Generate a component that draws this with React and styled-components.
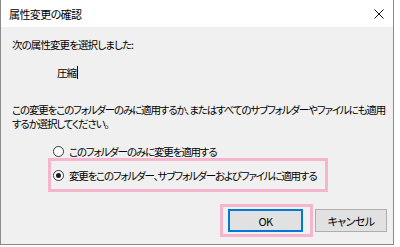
import React from "react";
import styled, { createGlobalStyle } from "styled-components";

const Global = createGlobalStyle`
  html, body { margin: 0; padding: 0; background: #ffffff; }
  body { font-family: "Noto Sans CJK JP", "Noto Sans", sans-serif; }
`;

const Window = styled.div`
  width: 394px;
  height: 245px;
  box-sizing: border-box;
  border: 1px solid #8a8a8a;
  border-top: none;
  display: flex;
  flex-direction: column;
  background: #f0f0f0;
  font-family: "Noto Sans CJK JP", sans-serif;
  font-feature-settings: "palt";
  color: #000;
`;

const TitleBar = styled.div`
  height: 27px;
  background: #ffffff;
  display: flex;
  align-items: center;
  justify-content: space-between;
  padding: 0 4px 0 8px;
  flex-shrink: 0;
`;

const Title = styled.span`
  font-size: 11px;
  letter-spacing: -0.6px;
  line-height: 14px;
`;

const CloseBtn = styled.span`
  width: 20px;
  height: 20px;
  display: flex;
  align-items: center;
  justify-content: center;
`;

const Content = styled.div`
  flex: 1;
  display: flex;
  flex-direction: column;
  padding: 0 6px 0 11px;
`;

const Text = styled.div`
  font-size: 10.5px;
  line-height: ${(p) => p.$lh || 15}px;
  letter-spacing: ${(p) => p.$ls ?? -0.9}px;
  margin-top: ${(p) => p.$mt || 0}px;
  padding-left: ${(p) => p.$pl || 0}px;
  white-space: nowrap;
`;

const Caret = styled.span`
  display: inline-block;
  width: 1px;
  height: 13px;
  background: #000;
  vertical-align: -2px;
  margin-left: 1px;
`;

const RadioRow = styled.label`
  display: flex;
  align-items: center;
  gap: 5px;
  height: ${(p) => p.$h || 14}px;
  font-size: 10.5px;
  letter-spacing: ${(p) => p.$ls ?? -0.9}px;
  white-space: nowrap;
`;

const Dot = styled.span`
  width: 11px;
  height: 11px;
  box-sizing: border-box;
  border: 1px solid #333;
  border-radius: 50%;
  background: #fff;
  display: flex;
  align-items: center;
  justify-content: center;
  flex-shrink: 0;
  &::after {
    content: "";
    width: 5px;
    height: 5px;
    border-radius: 50%;
    background: ${(p) => (p.$on ? "#1a1a1a" : "transparent")};
  }
`;

const Highlight = styled.div`
  box-sizing: border-box;
  border: 3px solid #f4b5cd;
  display: flex;
  align-items: center;
`;

const RadioGroup = styled.div`
  display: flex;
  flex-direction: column;
  margin-top: 14px;
  padding-left: 41px;
`;

const RadioHighlight = styled(Highlight)`
  width: 280px;
  height: 34px;
  margin-left: -5px;
  padding-left: 2px;
`;

const ButtonRow = styled.div`
  display: flex;
  justify-content: flex-end;
  align-items: center;
  margin-top: 12px;
  gap: 2px;
`;

const ButtonHighlight = styled(Highlight)`
  padding: 2px 7px 2px 5px;
`;

const Button = styled.button`
  width: ${(p) => p.$w || 75}px;
  height: 23px;
  box-sizing: border-box;
  background: #e1e1e1;
  border: ${(p) => (p.$primary ? "2px solid #0078d7" : "1px solid #adadad")};
  font-family: "Noto Sans CJK JP", sans-serif;
  font-feature-settings: "palt";
  font-size: 11px;
  letter-spacing: -0.6px;
  color: #000;
  padding: 0;
  display: flex;
  align-items: center;
  justify-content: center;
`;

export default function App() {
  return (
    <>
      <Global />
      <Window>
        <TitleBar>
          <Title>属性変更の確認</Title>
          <CloseBtn>
            <svg width="10" height="10" viewBox="0 0 10 10">
              <path d="M0.5 0.5 L9.5 9.5 M9.5 0.5 L0.5 9.5" stroke="#111" strokeWidth="1" fill="none" />
            </svg>
          </CloseBtn>
        </TitleBar>
        <Content>
          <Text $mt={10}>次の属性変更を選択しました:</Text>
          <Text $mt={13} $pl={45}>
            圧縮<Caret />
          </Text>
          <Text $mt={23} $lh={14} $ls={-1.15}>
            この変更をこのフォルダーのみに適用するか、またはすべてのサブフォルダーやファイルにも適用
            <br />
            するか選択してください。
          </Text>
          <RadioGroup>
            <RadioRow $h={13} $ls={-1.15}>
              <Dot />
              このフォルダーのみに変更を適用する
            </RadioRow>
            <RadioHighlight>
              <RadioRow $ls={-1.2}>
                <Dot $on />
                変更をこのフォルダー、サブフォルダーおよびファイルに適用する
              </RadioRow>
            </RadioHighlight>
          </RadioGroup>
          <ButtonRow>
            <ButtonHighlight>
              <Button $primary>OK</Button>
            </ButtonHighlight>
            <Button $w={72}>キャンセル</Button>
          </ButtonRow>
        </Content>
      </Window>
    </>
  );
}
